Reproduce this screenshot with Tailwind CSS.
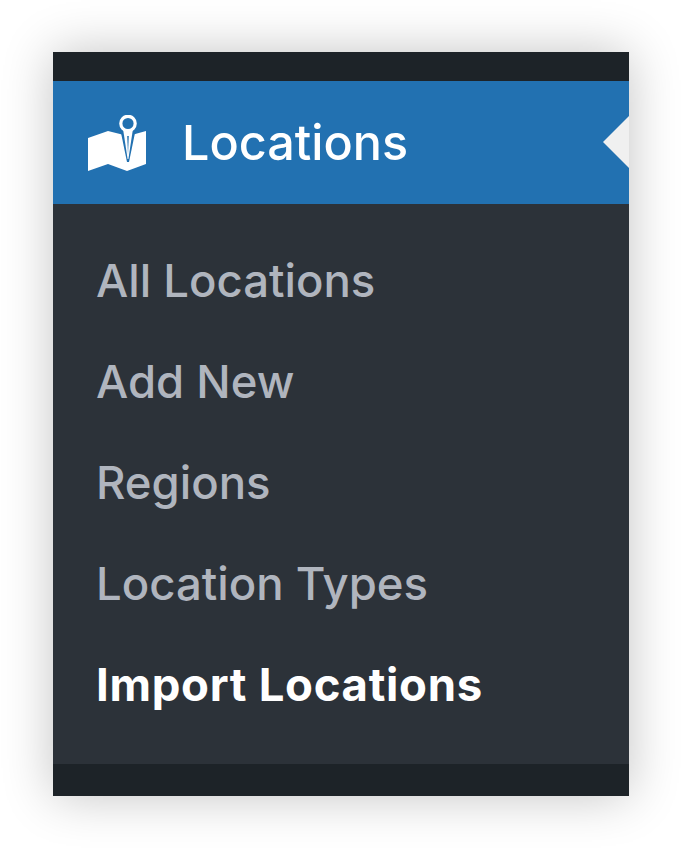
<!DOCTYPE html>
<html lang="en">
<head>
    <meta charset="UTF-8">
    <meta name="viewport" content="width=device-width, initial-scale=1.0">
    <title>Locations menu</title>
    <script src="https://cdn.jsdelivr.net/npm/@tailwindcss/browser@4"></script>
</head>
<body class="bg-white font-['Inter','Liberation_Sans',sans-serif]">
    <div class="w-[682px] h-[848px] pt-[52px] pl-[53px] overflow-hidden">
        <div class="w-[576px] bg-[#2c3239] shadow-[0_0_48px_rgba(0,0,0,0.24)]">
            <div class="h-[29px] bg-[#1d2328]"></div>

            <!-- current menu item -->
            <div class="relative flex items-center h-[123px] pl-[35px] bg-[#2271b1] text-white">
                <svg class="w-[58px] h-[57px] shrink-0 mt-[2px]" viewBox="88 115 58 57">
                    <path fill="#fff" d="M88 138 L108 131 L128 136 L146 131 L146 164 L127 171 L108 164 L88 171 Z"/>
                    <path fill="#2271b1" d="M120 128 L136 128 L129 162 L127 162 Z"/>
                    <circle cx="128" cy="123.5" r="7.2" fill="#2271b1" stroke="#fff" stroke-width="3.2"/>
                    <path fill="#fff" d="M123.2 130 L132.8 130 L128.4 159 L127.6 159 Z"/>
                    <path fill="#2271b1" d="M127.2 136 L128.8 136 L128 155 Z"/>
                </svg>
                <span class="ml-[36px] mt-[2px] text-[48.5px] font-[450] leading-none">Locations</span>
                <div class="absolute right-0 top-[35px] w-0 h-0 border-y-[26px] border-y-transparent border-r-[26px] border-r-[#f0f0f0]"></div>
            </div>

            <!-- submenu -->
            <ul class="pt-[27px] pb-[28px] pl-[43px] text-[45.5px] font-[450] text-[#b0b5be]">
                <li class="h-[101px] flex items-center">All Locations</li>
                <li class="h-[101px] flex items-center">Add New</li>
                <li class="h-[101px] flex items-center">Regions</li>
                <li class="h-[101px] flex items-center">Location Types</li>
                <li class="h-[101px] flex items-center text-white font-bold tracking-[0.7px]">Import Locations</li>
            </ul>

            <div class="h-[32px] bg-[#1d2328]"></div>
        </div>
    </div>
</body>
</html>
